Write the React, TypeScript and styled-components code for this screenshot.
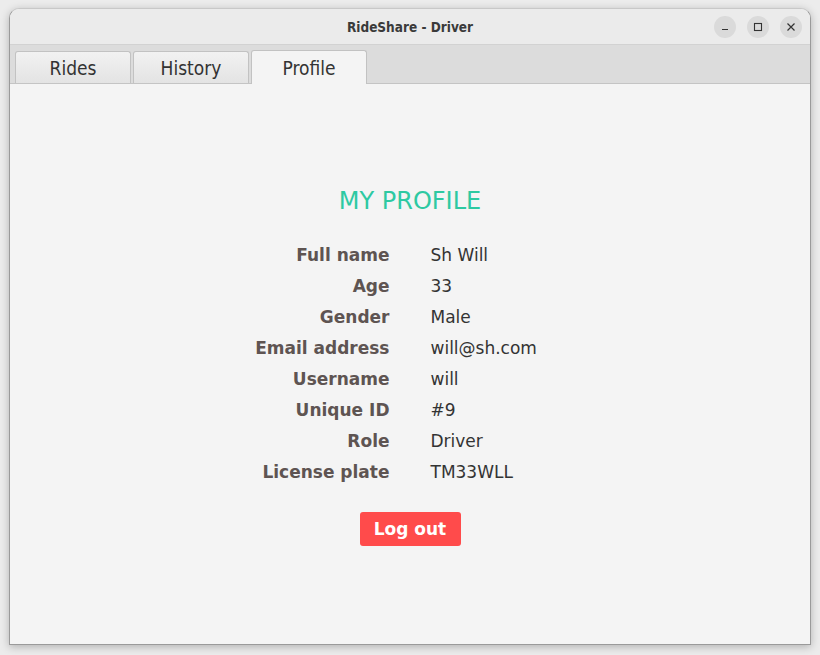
import React from "react";
import styled, { createGlobalStyle } from "styled-components";

const Global = createGlobalStyle`
  html, body { margin: 0; padding: 0; background: #f0f0f0; }
  body { width: 820px; height: 655px; overflow: hidden; font-family: "DejaVu Sans", sans-serif; }
`;

const Screen = styled.div`
  width: 820px;
  height: 655px;
  padding: 8px 9px 10px 9px;
  box-sizing: border-box;
  display: flex;
  background: #ececec;
`;

const Window = styled.div`
  flex: 1;
  display: flex;
  flex-direction: column;
  border: 1px solid #9a9a9a;
  border-top-color: #c8c8c8;
  border-radius: 10px 10px 0 0;
  overflow: hidden;
  background: #f4f4f4;
  box-shadow: 0 2px 8px rgba(0, 0, 0, 0.25);
`;

const TitleBar = styled.div`
  height: 35px;
  flex: none;
  display: flex;
  align-items: center;
  justify-content: center;
  position: relative;
  background: #ebebeb;
  border-bottom: 1px solid #d2d2d2;
`;

const Title = styled.div`
  font-family: "DejaVu Sans Condensed", "DejaVu Sans", sans-serif;
  font-weight: bold;
  font-size: 13.5px;
  color: #3a3a3a;
`;

const Controls = styled.div`
  position: absolute;
  right: 8px;
  top: 7px;
  display: flex;
  gap: 11px;
`;

const CtrlButton = styled.div`
  width: 22px;
  height: 22px;
  border-radius: 50%;
  background: #dadada;
  display: flex;
  align-items: center;
  justify-content: center;
`;

const TabBar = styled.div`
  height: 38px;
  flex: none;
  display: flex;
  align-items: flex-end;
  gap: 2px;
  padding: 0 5px;
  background: #dcdcdc;
  border-bottom: 1px solid #c4c4c4;
  position: relative;
`;

const Tab = styled.div<{ $active?: boolean }>`
  width: 116px;
  height: ${(p) => (p.$active ? "34px" : "32px")};
  box-sizing: border-box;
  display: flex;
  align-items: center;
  justify-content: center;
  font-family: "DejaVu Sans Condensed", "DejaVu Sans", sans-serif;
  font-size: 19px;
  color: #333;
  border: 1px solid #c2c2c2;
  border-bottom: none;
  border-radius: 3px 3px 0 0;
  background: ${(p) =>
    p.$active ? "#f4f4f4" : "linear-gradient(#f2f2f2, #e3e3e3)"};
  margin-bottom: ${(p) => (p.$active ? "-1px" : "0")};
  padding-top: 0;
`;

const Content = styled.div`
  flex: 1;
  display: flex;
  flex-direction: column;
  align-items: center;
  padding-top: 102px;
`;

const Heading = styled.div`
  font-size: 24px;
  color: #2ec9a2;
  line-height: 30px;
  margin-bottom: 29px;
`;

const Grid = styled.div`
  display: grid;
  grid-template-columns: 1fr 1fr;
  column-gap: 41px;
  row-gap: 11px;
  width: 360px;
`;

const Label = styled.div`
  text-align: right;
  font-weight: bold;
  font-size: 17px;
  line-height: 20px;
  color: #5e5452;
`;

const Value = styled.div`
  font-size: 17px;
  line-height: 20px;
  color: #333;
`;

const LogoutButton = styled.button`
  margin-top: 30px;
  width: 101px;
  height: 34px;
  border: none;
  border-radius: 3px;
  background: #ff4b4b;
  color: #fff;
  font-family: "DejaVu Sans", sans-serif;
  font-weight: bold;
  font-size: 17px;
  padding: 0;
`;

const rows: [string, string][] = [
  ["Full name", "Sh Will"],
  ["Age", "33"],
  ["Gender", "Male"],
  ["Email address", "will@sh.com"],
  ["Username", "will"],
  ["Unique ID", "#9"],
  ["Role", "Driver"],
  ["License plate", "TM33WLL"],
];

export default function App() {
  return (
    <>
      <Global />
      <Screen>
        <Window>
          <TitleBar>
            <Title>RideShare - Driver</Title>
            <Controls>
              <CtrlButton>
                <svg width="10" height="10" viewBox="0 0 10 10">
                  <path d="M2 7.5h6" stroke="#333" strokeWidth="1.2" />
                </svg>
              </CtrlButton>
              <CtrlButton>
                <svg width="10" height="10" viewBox="0 0 10 10">
                  <rect x="1.5" y="1.5" width="7" height="7" fill="none" stroke="#333" strokeWidth="1.1" />
                </svg>
              </CtrlButton>
              <CtrlButton>
                <svg width="10" height="10" viewBox="0 0 10 10">
                  <path d="M1.5 1.5l7 7M8.5 1.5l-7 7" stroke="#333" strokeWidth="1.2" />
                </svg>
              </CtrlButton>
            </Controls>
          </TitleBar>
          <TabBar>
            <Tab>Rides</Tab>
            <Tab>History</Tab>
            <Tab $active>Profile</Tab>
          </TabBar>
          <Content>
            <Heading>MY PROFILE</Heading>
            <Grid>
              {rows.map(([l, v]) => (
                <React.Fragment key={l}>
                  <Label>{l}</Label>
                  <Value>{v}</Value>
                </React.Fragment>
              ))}
            </Grid>
            <LogoutButton>Log out</LogoutButton>
          </Content>
        </Window>
      </Screen>
    </>
  );
}
